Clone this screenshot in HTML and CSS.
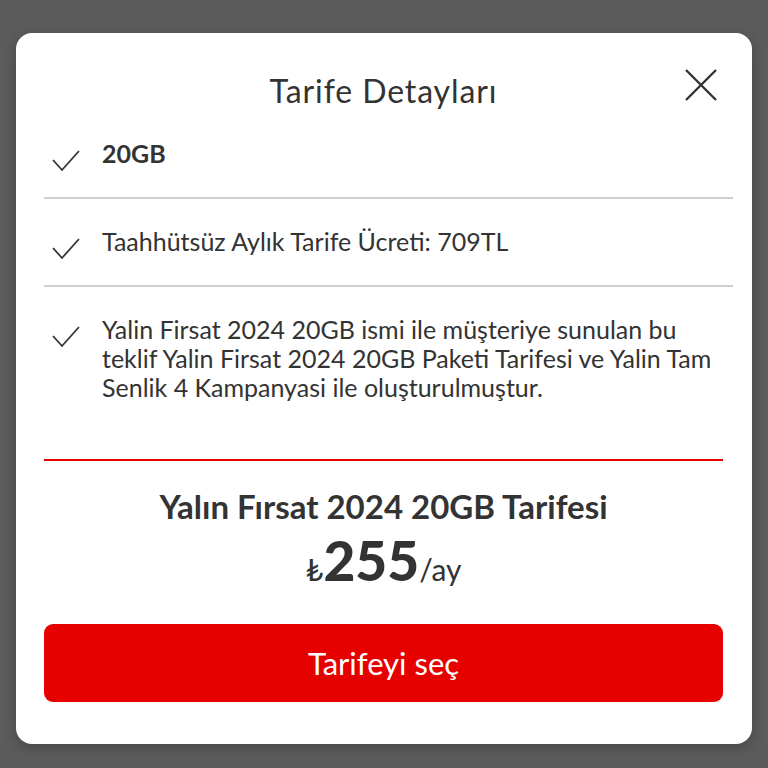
FILE: index.html
```html
<!DOCTYPE html>
<html>
<head>
    <meta name="viewport" content="width=device-width, initial-scale=1">
    <title>Tarife Detayları</title>
    <link rel="stylesheet" href="styles.css">
</head>
<body>
    <div class="modal">
        <div class="modal-header">
            <span></span>
            <h2 class="modal-title">Tarife Detayları</h2>
            <button class="close-btn" aria-label="Kapat">
                <svg width="34" height="34" viewBox="0 0 34 34">
                    <path d="M2 2 L32 32 M32 2 L2 32" stroke="#333" stroke-width="2.4" fill="none"/>
                </svg>
            </button>
        </div>

        <ul class="detail-list">
            <li class="detail-item">
                <svg class="check" width="28" height="22" viewBox="0 0 28 22">
                    <polyline points="1,10 10,20 27,1" stroke="#333" stroke-width="1.8" fill="none"/>
                </svg>
                <span class="detail-text bold">20GB</span>
            </li>
            <li class="detail-item">
                <svg class="check" width="28" height="22" viewBox="0 0 28 22">
                    <polyline points="1,10 10,20 27,1" stroke="#333" stroke-width="1.8" fill="none"/>
                </svg>
                <span class="detail-text">Taahhütsüz Aylık Tarife Ücreti: 709TL</span>
            </li>
            <li class="detail-item">
                <svg class="check" width="28" height="22" viewBox="0 0 28 22">
                    <polyline points="1,10 10,20 27,1" stroke="#333" stroke-width="1.8" fill="none"/>
                </svg>
                <span class="detail-text">Yalin Firsat 2024 20GB ismi ile müşteriye sunulan bu teklif Yalin Firsat 2024 20GB Paketi Tarifesi ve Yalin Tam Senlik 4 Kampanyasi ile oluşturulmuştur.</span>
            </li>
        </ul>

        <div class="plan-summary">
            <div class="plan-name">Yalın Fırsat 2024 20GB Tarifesi</div>
            <div class="plan-price">
                <span class="currency">₺</span><span class="amount">255</span><span class="period">/ay</span>
            </div>
        </div>

        <button class="select-btn">Tarifeyi seç</button>
    </div>
</body>
</html>
```

FILE: styles.css
```css
* {
    box-sizing: border-box;
}

body {
    margin: 0;
    background: #5c5c5c;
    font-family: Lato, "Open Sans", "DejaVu Sans", sans-serif;
    color: #333;
    padding: 33px 16px 0 16px;
    height: 768px;
    overflow: hidden;
}

.modal {
    background: #fff;
    border-radius: 16px;
    height: 711px;
    padding: 0 29px 0 28px;
    display: flex;
    flex-direction: column;
    box-shadow: 0 4px 14px rgba(0, 0, 0, 0.25);
}

.modal-header {
    display: grid;
    grid-template-columns: 1fr auto 1fr;
    align-items: start;
    padding-top: 40px;
}

.modal-title {
    margin: 0;
    font-size: 32px;
    font-weight: 400;
    line-height: 36px;
    letter-spacing: 0.9px;
    color: #333;
}

.close-btn {
    justify-self: end;
    margin-top: -5px;
    margin-right: 5px;
    padding: 0;
    border: none;
    background: none;
    cursor: pointer;
    display: flex;
}

.detail-list {
    list-style: none;
    margin: 2px -10px 0 0;
    padding: 0;
}

.detail-item {
    display: flex;
    align-items: flex-start;
    gap: 22px;
    padding: 28px 10px 29px 8px;
    border-bottom: 2px solid #cfcfcf;
}

.detail-item:last-child {
    border-bottom: none;
    padding-bottom: 0;
}

/* icon sits low next to the text line without stretching the row */
.check {
    flex: none;
    margin: 11px 0 -11px 0;
}

.detail-text {
    font-size: 25px;
    line-height: 29px;
    color: #333;
}

.detail-text.bold {
    font-weight: 700;
}

.plan-summary {
    margin-top: auto;
    border-top: 2px solid #e60000;
    text-align: center;
    padding-top: 26px;
}

.plan-name {
    font-size: 33px;
    font-weight: 700;
    line-height: 38px;
}

.plan-price {
    margin-top: 2px;
    line-height: 66px;
}

.currency {
    font-size: 31px;
    font-weight: 400;
}

.amount {
    font-size: 55px;
    font-weight: 900;
}

.period {
    font-size: 30px;
    font-weight: 400;
}

.select-btn {
    margin: 16px 0 42px 0;
    height: 78px;
    width: 100%;
    background: #e60000;
    border: none;
    border-radius: 9px;
    color: #fff;
    font-family: Lato, "Open Sans", sans-serif;
    font-size: 31px;
    font-weight: 400;
    cursor: pointer;
}
```
